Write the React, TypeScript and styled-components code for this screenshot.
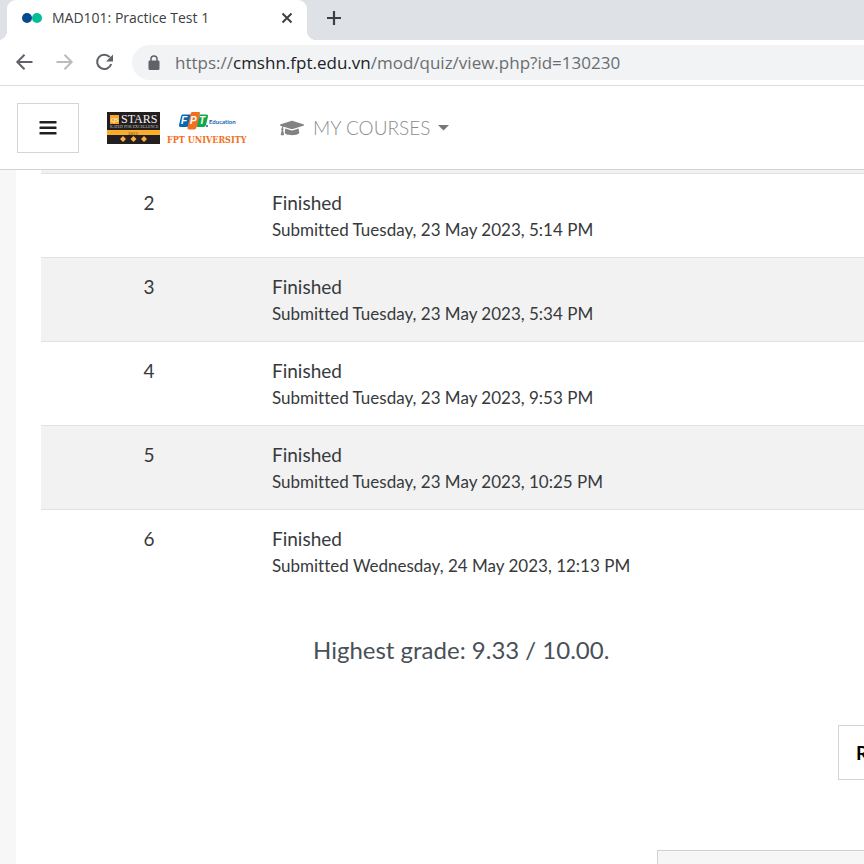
import React from "react";
import styled, { createGlobalStyle } from "styled-components";
import { FaGraduationCap } from "react-icons/fa";

const GlobalStyle = createGlobalStyle`
  *, *::before, *::after { box-sizing: border-box; }
  html, body, #root { height: 100%; }
  body { margin: 0; background: #f7f7f7; overflow: hidden; }
  button { font: inherit; padding: 0; border: 0; background: none; color: inherit; cursor: pointer; }
`;

const chromeFont = `"Open Sans", "Noto Sans", sans-serif`;

const Page = styled.div`
  display: flex;
  flex-direction: column;
  height: 100vh;
  overflow: hidden;
  font-family: Lato, sans-serif;
  font-variant-ligatures: none;
  color: #373a3c;
`;

const TabStrip = styled.div`
  flex: none;
  display: flex;
  align-items: flex-end;
  height: 40px;
  padding-left: 7px;
  background: #dee1e6;
`;

const Tab = styled.div`
  position: relative;
  display: flex;
  align-items: center;
  width: 300px;
  height: 40px;
  padding: 0 12px 4px 15px;
  background: #fff;
  border-radius: 9px 9px 0 0;
  font-family: ${chromeFont};
  font-size: 14px;
  color: #3c4043;

  &::before, &::after {
    content: "";
    position: absolute;
    bottom: 0;
    width: 9px;
    height: 9px;
  }
  &::before {
    right: 100%;
    background: radial-gradient(circle at 0 0, transparent 9px, #fff 9px);
  }
  &::after {
    left: 100%;
    background: radial-gradient(circle at 100% 0, transparent 9px, #fff 9px);
  }
`;

const TabTitle = styled.span`
  flex: 1;
  margin-left: 10px;
  line-height: 20px;
  white-space: nowrap;
`;

const IconButton = styled.button<{ $tone?: string }>`
  flex: none;
  display: flex;
  align-items: center;
  justify-content: center;
  width: 16px;
  height: 16px;
  color: ${(p) => p.$tone ?? "#3c4043"};
`;

const NewTab = styled(IconButton)`
  margin: 0 0 14px 19px;
`;

const AddressRow = styled.div`
  flex: none;
  display: flex;
  align-items: center;
  height: 46px;
  padding-left: 14px;
  background: #fff;
  border-bottom: 1px solid #dadce0;
`;

const NavIcons = styled.div`
  display: flex;
  gap: 20px;
  margin-right: 18px;

  button { width: 20px; height: 20px; }
`;

const Omnibox = styled.div`
  flex: 1;
  display: flex;
  align-items: center;
  gap: 15px;
  height: 35px;
  padding-left: 16px;
  background: #f1f3f4;
  border-radius: 18px 0 0 18px;
  font-family: ${chromeFont};
  font-size: 17px;
  color: #6a6d71;
`;

const Url = styled.div`
  flex: 1;
  outline: none;
  line-height: 24px;
  white-space: nowrap;
`;

const Host = styled.span`
  color: #202124;
`;

const SiteBar = styled.header`
  flex: none;
  display: flex;
  align-items: center;
  height: 84px;
  padding-left: 17px;
  background: #fff;
  border-bottom: 1px solid #d3d3d3;
`;

const MenuButton = styled.button`
  display: flex;
  align-items: center;
  justify-content: center;
  width: 62px;
  height: 50px;
  border: 1px solid #d4d4d4;
`;

const BrandLink = styled.a`
  display: flex;
  margin-left: 28px;
`;

const CoursesButton = styled.button`
  display: flex;
  align-items: center;
  margin-left: 31px;
  font-size: 19px;
  font-weight: 300;
  color: #8c8c8c;
`;

const CoursesLabel = styled.span`
  margin: 0 8px 0 9px;
`;

const Main = styled.main`
  flex: 1;
  margin-left: 16px;
  padding-left: 25px;
  overflow: hidden;
  background: #fff;
`;

const Attempts = styled.table`
  width: 100%;
  border-collapse: separate;
  border-spacing: 0;
`;

const AttemptRow = styled.tr<{ $shaded: boolean }>`
  background: ${(p) => (p.$shaded ? "#f2f2f2" : "#fff")};
`;

const HeadEdge = styled.td`
  height: 3px;
  padding: 0;
  background: #f1f1f1;
`;

const Cell = styled.td<{ $center?: boolean }>`
  width: ${(p) => (p.$center ? "216px" : "auto")};
  height: 84px;
  padding: 15px 15px 13px;
  border-top: 1px solid #dee2e6;
  vertical-align: top;
  text-align: ${(p) => (p.$center ? "center" : "left")};
  font-size: 19px;
  line-height: 28px;
`;

const Submitted = styled.span`
  display: block;
  font-size: 17px;
  line-height: 26px;
`;

const Grade = styled.h3`
  margin: 41px 0 0 272px;
  font-size: 24px;
  font-weight: 400;
  line-height: 32px;
  color: #495057;
`;

const ReattemptButton = styled.button`
  display: block;
  height: 55px;
  margin: 59px 0 0 797px;
  padding: 0 17px;
  border: 1px solid #d4d4d4;
  font-size: 19px;
  font-weight: 700;
  color: #000;
  white-space: nowrap;
`;

const JumpPanel = styled.div`
  height: 54px;
  margin: 70px 0 0 616px;
  border: 1px solid #d0d0d0;
  border-right: 0;
  background: #f6f6f6;
`;

const attempts = [
  { no: 2, submitted: "Tuesday, 23 May 2023, 5:14 PM" },
  { no: 3, submitted: "Tuesday, 23 May 2023, 5:34 PM" },
  { no: 4, submitted: "Tuesday, 23 May 2023, 9:53 PM" },
  { no: 5, submitted: "Tuesday, 23 May 2023, 10:25 PM" },
  { no: 6, submitted: "Wednesday, 24 May 2023, 12:13 PM" },
];

function Favicon() {
  return (
    <svg width="20" height="12" viewBox="0 0 20 12" aria-hidden="true">
      <circle cx="5" cy="6" r="5" fill="#044a8f" />
      <circle cx="15" cy="6" r="5" fill="#05bd94" />
    </svg>
  );
}

function Brand() {
  return (
    <svg width="142" height="34" viewBox="0 0 142 34" role="img" aria-label="FPT University">
      <rect x="0" y="1" width="53" height="32" fill="#231f20" />
      <rect x="3" y="4" width="9" height="9" fill="#f6a623" />
      <text x="4" y="11" fontFamily="Liberation Serif" fontSize="6" fill="#fff">QS</text>
      <text x="14" y="12" fontFamily="Liberation Serif" fontSize="12" fill="#f4f4f4">STARS</text>
      <text x="3" y="17" fontFamily="Liberation Serif" fontSize="4" fill="#c9c5c0">RATED FOR EXCELLENCE</text>
      <rect x="0" y="19" width="53" height="5" fill="#f9ae2b" />
      <text x="21" y="24" fontFamily="Liberation Serif" fontSize="5" fill="#5b3d10">2012</text>
      <path d="M16 25l3 3-3 3-3-3zM26.500 25l3 3-3 3-3-3zM37 25l3 3-3 3-3-3z" fill="#fbb040" />
      <path d="M75.500 3.500h8q1.500 0 1 1.500l-2.500 9q-.5 2-2.500 2h-6q-2 0-1.500-2l2-8.500q.5-2 1.500-2z" fill="#0b66b1" />
      <path d="M93.500 3.500h6q2 0 1.500 2l-2 8.500q-.5 2-2.500 2h-6q-1.500 0-1-1.500l2.500-9.500q.5-1.500 1.500-1.500z" fill="#11a84c" />
      <path d="M85 1h7q1.500 0 1 1.500l-3.500 14q-.5 2-2.500 2h-5q-2 0-1.500-2l3-13.500q.5-2 1.500-2z" fill="#f26f21" />
      <g fontFamily="Liberation Sans" fontWeight="700" fontStyle="italic" fontSize="10" fill="#fff">
        <text x="74" y="13">F</text>
        <text x="83" y="13">P</text>
        <text x="92" y="13">T</text>
      </g>
      <circle cx="100" cy="15" r="1" fill="#0b66b1" />
      <text x="102" y="13" fontFamily="Lato" fontWeight="700" fontSize="6" fill="#0b66b1">Education</text>
      <text x="60" y="32" fontFamily="DejaVu Serif Condensed, Liberation Serif, serif" fontWeight="700" fontSize="9" fill="#f26f21">FPT UNIVERSITY</text>
    </svg>
  );
}

export default function App() {
  return (
    <Page>
      <GlobalStyle />
      <TabStrip>
        <Tab>
          <Favicon />
          <TabTitle>MAD101: Practice Test 1</TabTitle>
          <IconButton aria-label="Close tab">
            <svg width="12" height="12" viewBox="0 0 12 12" stroke="currentColor" strokeWidth="2">
              <path d="M1.500 1.500l9 9M10.500 1.500l-9 9" />
            </svg>
          </IconButton>
        </Tab>
        <NewTab aria-label="New tab">
          <svg width="16" height="16" viewBox="0 0 16 16" stroke="currentColor" strokeWidth="2.200">
            <path d="M8 1v14M1 8h14" />
          </svg>
        </NewTab>
      </TabStrip>

      <AddressRow>
        <NavIcons>
          <IconButton aria-label="Back" $tone="#5f6368">
            <svg width="20" height="20" viewBox="0 0 20 20" fill="none" stroke="currentColor" strokeWidth="2">
              <path d="M18.500 9H3.500M10.500 1.800L3.300 9l7.200 7.200" />
            </svg>
          </IconButton>
          <IconButton aria-label="Forward" $tone="#babcbe">
            <svg width="20" height="20" viewBox="0 0 20 20" fill="none" stroke="currentColor" strokeWidth="2">
              <path d="M2.500 9h15M10.500 1.800l7.200 7.200-7.200 7.200" />
            </svg>
          </IconButton>
          <IconButton aria-label="Reload" $tone="#5f6368">
            <svg width="20" height="20" viewBox="0 0 20 20">
              <path d="M15.800 4.200A7.200 7.200 0 1 0 17.200 11" fill="none" stroke="currentColor" strokeWidth="2" />
              <path d="M19 1.500V8.500h-7z" fill="currentColor" />
            </svg>
          </IconButton>
        </NavIcons>
        <Omnibox>
          <svg width="12" height="16" viewBox="0 0 12 16" aria-hidden="true">
            <rect x="0.500" y="5.500" width="11" height="9.500" rx="1.300" fill="#5f6368" />
            <path d="M3 6V4a3 3 0 0 1 6 0v2" fill="none" stroke="#5f6368" strokeWidth="1.500" />
          </svg>
          <Url role="textbox" aria-label="Address bar" contentEditable suppressContentEditableWarning spellCheck={false}>
            https://<Host>cmshn.fpt.edu.vn</Host>/mod/quiz/view.php?id=130230
          </Url>
        </Omnibox>
      </AddressRow>

      <SiteBar>
        <MenuButton aria-label="Side panel">
          <svg width="18" height="14" viewBox="0 0 18 14" fill="#1d2125">
            <rect x="0.500" y="0" width="17" height="2.500" rx=".5" />
            <rect x="0.500" y="5.500" width="17" height="2.500" rx=".5" />
            <rect x="0.500" y="11" width="17" height="2.500" rx=".5" />
          </svg>
        </MenuButton>
        <BrandLink href="#home">
          <Brand />
        </BrandLink>
        <CoursesButton aria-haspopup="true">
          <FaGraduationCap size={24} color="#828282" aria-hidden="true" />
          <CoursesLabel>MY COURSES</CoursesLabel>
          <svg width="11" height="6" viewBox="0 0 11 6" fill="#777" aria-hidden="true">
            <path d="M0 0h11L5.500 5.500z" />
          </svg>
        </CoursesButton>
      </SiteBar>

      <Main>
        <Attempts aria-label="Summary of your previous attempts">
          <tbody>
            <tr>
              <HeadEdge colSpan={2} />
            </tr>
            {attempts.map((a) => (
              <AttemptRow key={a.no} $shaded={a.no % 2 === 1}>
                <Cell $center>{a.no}</Cell>
                <Cell>
                  Finished
                  <Submitted>Submitted {a.submitted}</Submitted>
                </Cell>
              </AttemptRow>
            ))}
          </tbody>
        </Attempts>
        <Grade>Highest grade: 9.33 / 10.00.</Grade>
        <ReattemptButton>Re-attempt quiz</ReattemptButton>
        <JumpPanel />
      </Main>
    </Page>
  );
}
